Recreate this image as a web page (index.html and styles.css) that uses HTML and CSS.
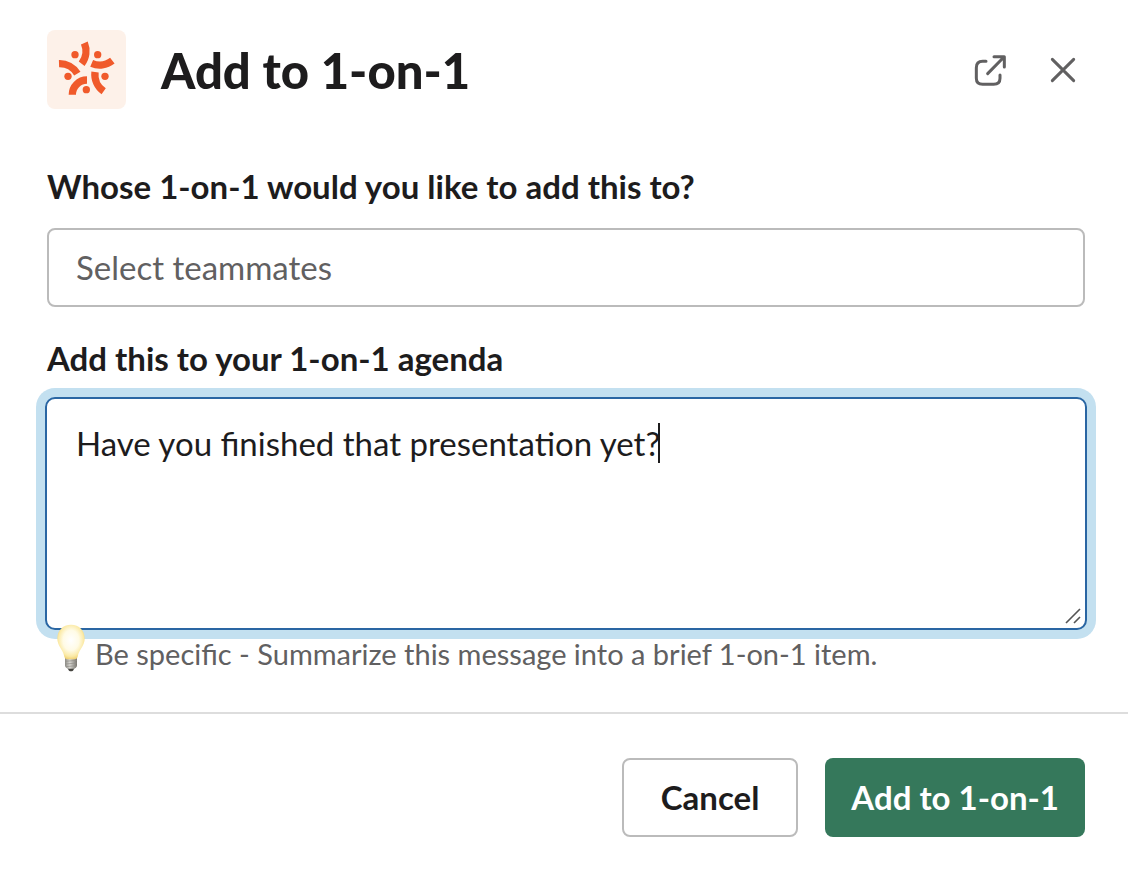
FILE: index.html
```html
<!DOCTYPE html>
<html lang="en">
<head>
    <meta charset="UTF-8">
    <meta name="viewport" content="width=device-width, initial-scale=1.0">
    <title>Add to 1-on-1</title>
    <link rel="stylesheet" href="styles.css">
</head>
<body>
    <form class="modal">
        <!-- Header -->
        <header class="header">
            <svg class="logo" viewBox="21 30 237 237" aria-hidden="true">
                <rect x="21" y="30" width="237" height="237" rx="24" fill="#fdf1e9"/>
                <g fill="none" stroke="#f05a2b" stroke-width="22">
                    <path d="M133 69A62 62 0 0 1 125 131"/>
                    <path d="M155 130A62 62 0 0 0 217 122"/>
                    <path d="M165 156A62 62 0 0 0 191 214"/>
                    <path d="M141 180A44 44 0 0 0 97 224"/>
                    <path d="M57 131A62 62 0 0 1 112 161"/>
                </g>
                <g fill="#f05a2b">
                    <circle cx="105" cy="104" r="11"/>
                    <circle cx="173" cy="104" r="11"/>
                    <circle cx="195" cy="169" r="11"/>
                    <circle cx="139" cy="209" r="11"/>
                    <circle cx="84" cy="169" r="11"/>
                </g>
            </svg>
            <h1>Add to 1-on-1</h1>
            <button type="button" class="icon-btn" aria-label="Open in new window">
                <svg width="34" height="34" viewBox="39 36 102 102">
                    <path d="M78 61H68Q49 61 49 80V112Q49 130 68 130H101Q120 130 120 112V102M83 98L132 48M102 47H133V78"/>
                </svg>
            </button>
            <button type="button" class="icon-btn" aria-label="Close">
                <svg width="28" height="28" viewBox="267 48 84 84">
                    <path d="M277 58L341 122M341 58L277 122"/>
                </svg>
            </button>
        </header>

        <!-- Fields -->
        <main class="content">
            <label for="teammates">Whose 1-on-1 would you like to add this to?</label>
            <input type="text" id="teammates" name="teammates" placeholder="Select teammates">

            <label for="agenda">Add this to your 1-on-1 agenda</label>
            <div class="agenda">
                <textarea id="agenda" name="agenda" spellcheck="false">Have you finished that presentation yet?</textarea>
                <span class="caret"></span>
                <svg class="grip" viewBox="104 85 48 48" aria-hidden="true">
                    <path d="M107 130L149 88M131 130L149 112"/>
                </svg>
            </div>

            <p class="hint">
                <svg class="bulb" viewBox="81 72 84 144" aria-hidden="true">
                    <defs>
                        <radialGradient id="glass" cx="50%" cy="45%" r="58%">
                            <stop offset="0" stop-color="#ffffff"/>
                            <stop offset="0.5" stop-color="#fffbe6"/>
                            <stop offset="0.8" stop-color="#fbeaa6"/>
                            <stop offset="1" stop-color="#ecca68"/>
                        </radialGradient>
                        <linearGradient id="cap">
                            <stop offset="0" stop-color="#8b8a85"/>
                            <stop offset="0.4" stop-color="#d8d7d2"/>
                            <stop offset="1" stop-color="#77756f"/>
                        </linearGradient>
                    </defs>
                    <path d="M112 203H134L129 212Q123 215 117 212Z" fill="#45443f"/>
                    <path d="M105 174H141V198Q139 205 132 206H114Q107 205 105 198Z" fill="url(#cap)"/>
                    <path d="M105 184L141 181M106 192L141 189M107 200L140 197" stroke="#8f8d86" stroke-width="2"/>
                    <path d="M123 74C98 74 82 92 82 115C82 139 99 148 103 170Q104 177 111 178H135Q142 177 143 170C147 148 164 139 164 115C164 92 148 74 123 74Z" fill="url(#glass)"/>
                </svg>
                Be specific - Summarize this message into a brief 1-on-1 item.
            </p>
        </main>

        <!-- Actions -->
        <footer class="footer">
            <button type="button" class="btn">Cancel</button>
            <button type="submit" class="btn btn-primary">Add to 1-on-1</button>
        </footer>
    </form>
</body>
</html>
```

FILE: styles.css
```css
* {
    margin: 0;
    padding: 0;
    box-sizing: border-box;
}

body {
    font-family: 'Lato', sans-serif;
    font-size: 33px;
    line-height: 40px;
    background-color: #ffffff;
    color: #1d1c1d;
}

input,
textarea,
button {
    font: inherit;
    color: inherit;
}

/* Header */
.header {
    display: flex;
    align-items: center;
    padding: 30px 48px 0 47px;
}

.logo {
    width: 79px;
    height: 79px;
    margin-right: 35px;
}

h1 {
    flex: 1;
    font-size: 49px;
    font-weight: 900;
    line-height: 56px;
}

.icon-btn {
    display: flex;
    padding: 3px;
    margin-left: 36px;
    background: none;
    border: none;
    cursor: pointer;
}

.icon-btn path {
    fill: none;
    stroke: #616061;
    stroke-width: 9;
    stroke-linecap: round;
    stroke-linejoin: round;
}

/* Fields */
.content {
    padding: 57px 43px 40px 47px;
}

label {
    display: block;
    font-weight: bold;
}

input {
    display: block;
    width: 100%;
    height: 79px;
    margin: 22px 0 31px;
    padding: 0 27px 2px;
    border: 2px solid #bbbbbb;
    border-radius: 8px;
    outline: none;
}

input::placeholder {
    color: #616061;
    opacity: 1;
}

.agenda {
    position: relative;
    margin: 19px -2px 0;
}

textarea {
    display: block;
    width: 100%;
    height: 233px;
    padding: 24px 29px;
    border: 2px solid #2a66a3;
    border-radius: 10px;
    box-shadow: 0 0 0 9px #c3e0f0;
    outline: none;
    resize: none;
}

.caret {
    position: absolute;
    top: 26px;
    left: 613px;
    width: 2px;
    height: 40px;
    background-color: #1d1c1d;
}

.grip {
    position: absolute;
    right: 6px;
    bottom: 6px;
    width: 16px;
    height: 16px;
    stroke: #555555;
    stroke-width: 5;
}

.hint {
    position: relative;
    display: flex;
    align-items: flex-end;
    gap: 10px;
    margin-top: -6px;
    padding-left: 10px;
    font-size: 29px;
    line-height: 36px;
    color: #616061;
}

.bulb {
    width: 28px;
    height: 48px;
}

/* Actions */
.footer {
    display: flex;
    justify-content: flex-end;
    gap: 27px;
    padding: 44px 43px 35px;
    border-top: 2px solid #dddddd;
}

.btn {
    height: 79px;
    padding: 0 37px 2px;
    font-weight: bold;
    background-color: #ffffff;
    border: 2px solid #bbbbbb;
    border-radius: 8px;
    cursor: pointer;
}

.btn-primary {
    padding: 0 26px 2px;
    color: #ffffff;
    background-color: #35785b;
    border: none;
}
```
